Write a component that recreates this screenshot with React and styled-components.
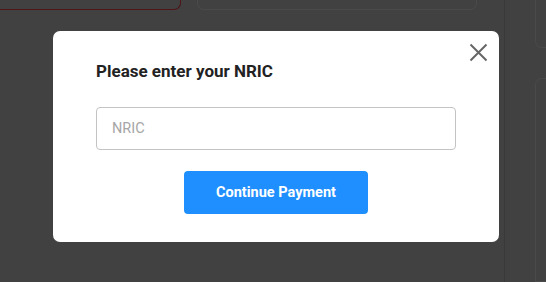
import React, { useState } from 'react';
import styled, { createGlobalStyle } from 'styled-components';

const GlobalStyle = createGlobalStyle`
  * { box-sizing: border-box; }
  html, body {
    margin: 0;
    padding: 0;
    height: 100%;
    background: #414141;
    font-family: Roboto, "Liberation Sans", Arial, sans-serif;
    overflow: hidden;
  }
`;

const S = {
  Page: styled.div`
    display: flex;
    height: 282px;
    width: 546px;
    background: #414141;
  `,
  Main: styled.div`
    width: 505px;
    flex-shrink: 0;
    border-right: 1px solid #393939;
  `,
  CardRow: styled.div`
    display: flex;
    gap: 16px;
  `,
  Card: styled.div`
    width: ${({ width }) => width}px;
    height: 10px;
    border: 1px solid ${({ accent }) => (accent ? '#4e1418' : '#4a4a4a')};
    border-top: none;
    border-left: ${({ flush }) => (flush ? 'none' : undefined)};
    border-radius: ${({ flush }) => (flush ? '0 0 7px 0' : '0 0 7px 7px')};
  `,
  Side: styled.div`
    flex: 1;
    display: flex;
    flex-direction: column;
    gap: 30px;
    padding-left: 30px;
  `,
  SideCard: styled.div`
    height: ${({ height }) => height}px;
    border: 1px solid #4a4a4a;
    border-right: none;
    border-top: ${({ top }) => (top ? '1px solid #4a4a4a' : 'none')};
    border-radius: ${({ top }) => (top ? '7px 0 0 0' : '0 0 0 7px')};
  `,
  Overlay: styled.div`
    position: fixed;
    inset: 0;
    padding: 31px 0 0 53px;
  `,
  Modal: styled.div`
    position: relative;
    width: 446px;
    height: 211px;
    padding: 30px 43px 28px;
    background: #fff;
    border-radius: 7px;
    display: flex;
    flex-direction: column;
    align-items: center;
  `,
  Close: styled.button`
    position: absolute;
    top: 12px;
    right: 11px;
    width: 19px;
    height: 19px;
    padding: 0;
    border: none;
    background: none;
    cursor: pointer;
    color: #666;
    display: flex;
  `,
  Title: styled.h2`
    align-self: stretch;
    margin: 0 0 26px;
    font-size: 17px;
    line-height: 20px;
    font-weight: 700;
    color: #222;
  `,
  Input: styled.input`
    width: 100%;
    height: 43px;
    flex-shrink: 0;
    padding: 0 15px;
    border: 1px solid #c4c4c4;
    border-radius: 4px;
    font-family: inherit;
    font-size: 14.5px;
    color: #333;
    outline: none;
    &::placeholder { color: #a6a6a6; }
  `,
  Button: styled.button`
    margin-top: 21px;
    width: 184px;
    height: 43px;
    flex-shrink: 0;
    border: none;
    border-radius: 4px;
    background: #1f8fff;
    color: #fff;
    font-family: inherit;
    font-size: 14.5px;
    font-weight: 700;
    cursor: pointer;
  `,
};

const CloseIcon = () => (
  <svg width="19" height="19" viewBox="0 0 19 19" fill="none">
    <path d="M1.5 1.5 L17.5 17.5 M17.5 1.5 L1.5 17.5" stroke="currentColor" strokeWidth="2" />
  </svg>
);

const App = () => {
  const [nric, setNric] = useState('');

  return (
    <>
      <GlobalStyle />
      <S.Page>
        <S.Main>
          <S.CardRow>
            <S.Card width={181} accent flush />
            <S.Card width={280} />
          </S.CardRow>
        </S.Main>
        <S.Side>
          <S.SideCard height={52} />
          <S.SideCard height={220} top />
        </S.Side>
      </S.Page>
      <S.Overlay>
        <S.Modal>
          <S.Close aria-label="Close">
            <CloseIcon />
          </S.Close>
          <S.Title>Please enter your NRIC</S.Title>
          <S.Input
            placeholder="NRIC"
            value={nric}
            onChange={e => setNric(e.target.value)}
          />
          <S.Button>Continue Payment</S.Button>
        </S.Modal>
      </S.Overlay>
    </>
  );
};

export default App;
